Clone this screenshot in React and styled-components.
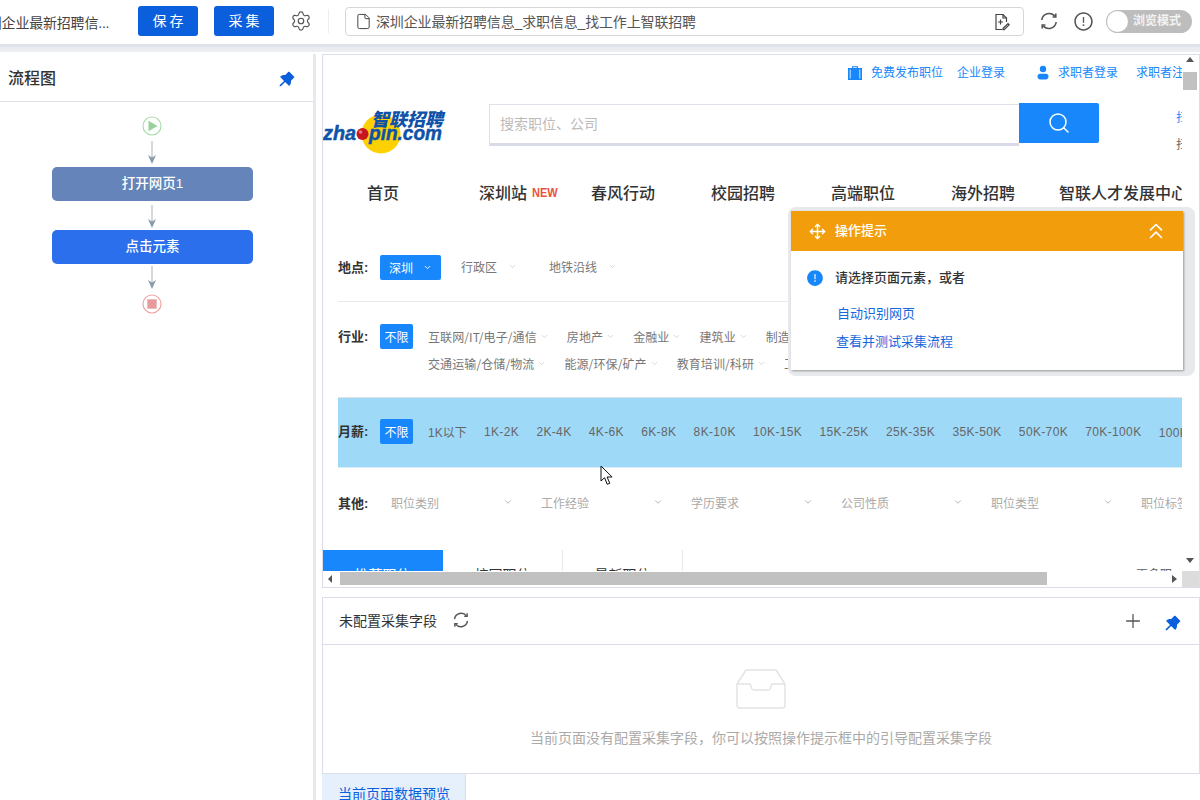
import React from "react";
import styled, { createGlobalStyle } from "styled-components";
import { Settings, File, Move, ChevronsUp, Search, Plus, ChevronDown } from "lucide-react";
import { AiFillPushpin, AiOutlineExclamationCircle, AiFillExclamationCircle } from "react-icons/ai";

const Global = createGlobalStyle`
  html, body { margin: 0; padding: 0; width: 1200px; height: 800px; overflow: hidden; background: #fff; }
  body, button, input { font-family: "Liberation Sans", "Noto Sans CJK SC", sans-serif; }
  * { box-sizing: border-box; }
`;

const Screen = styled.div`position: relative; width: 1200px; height: 800px; overflow: hidden; background: #fff; color: #333;`;

/* top bar */
const TopBar = styled.header`position: absolute; left: 0; top: 0; width: 1200px; height: 44px; background: #fff;`;
const Gutter = styled.div`position: absolute; left: 0; top: 44px; width: 1200px; height: 8px; background: linear-gradient(#dfe2e9 0, #dfe2e9 3px, #e9ebf0 3px, #eceef2 100%);`;
const DocTitle = styled.div`position: absolute; left: -26px; top: 13px; font-size: 14px; line-height: 20px; letter-spacing: -0.2px; color: #444; white-space: nowrap;`;
const ActionButton = styled.button`
  position: absolute; left: ${p => p.$x}px; top: 6px; width: 60px; height: 30px; border: 0; border-radius: 3px;
  background: #0b5fdc; color: #fff; font-size: 14px; line-height: 30px; letter-spacing: 3px; padding: 0 0 0 3px;
`;
const GearIcon = styled(Settings)`position: absolute; left: 290px; top: 10px; color: #555;`;
const Divider = styled.div`position: absolute; left: 328px; top: 9px; width: 1px; height: 24px; background: #eceef1;`;
const UrlBox = styled.div`position: absolute; left: 345px; top: 7px; width: 679px; height: 29px; border: 1px solid #d4d6da; border-radius: 4px;`;
const UrlFile = styled(File)`position: absolute; left: 9px; top: 5px; color: #444;`;
const UrlText = styled.span`position: absolute; left: 30px; top: 4px; font-size: 14px; line-height: 20px; letter-spacing: -0.15px; color: #555; white-space: nowrap;`;
const ToolSvg = styled.svg`position: absolute; left: ${p => p.$x}px; top: ${p => p.$y}px; display: block;`;
const AlertIcon = styled(AiOutlineExclamationCircle)`position: absolute; left: 1073px; top: 11px; color: #555;`;
const Toggle = styled.div`position: absolute; left: 1106px; top: 10px; width: 86px; height: 23px; border-radius: 12px; background: #bdbdbd;`;
const Knob = styled.div`position: absolute; left: 1px; top: 1px; width: 21px; height: 21px; border-radius: 50%; background: #fff;`;
const ToggleText = styled.span`position: absolute; left: 27px; top: 3px; font-size: 12px; line-height: 17px; font-weight: 700; color: #f2f2f2; white-space: nowrap;`;

/* flow panel */
const FlowPanel = styled.aside`position: absolute; left: 0; top: 54px; width: 316px; height: 746px; background: #fff; border-right: 3px solid #e6e8ee;`;
const FlowHeader = styled.div`position: relative; height: 48px; border-bottom: 1px solid #dfe0ea;`;
const FlowTitle = styled.h2`position: absolute; left: 8px; top: 13px; margin: 0; font-size: 16px; line-height: 24px; font-weight: 500; color: #333;`;
const PinIcon = styled(AiFillPushpin)`position: absolute; left: ${p => p.$x}px; top: ${p => p.$y}px; color: #0b5fdc;`;
const FlowNode = styled.div`
  position: absolute; left: 52px; top: ${p => p.$y}px; width: 201px; height: 34px; border-radius: 5px;
  background: ${p => p.$bg}; color: #fff; font-size: 13.5px; font-weight: 500; line-height: 34px; text-align: center;
`;

/* embedded page */
const Frame = styled.section`position: absolute; left: 322px; top: 54px; width: 878px; height: 534px; background: #fff; border: 1px solid #dcdde8;`;
const Viewport = styled.div`position: absolute; left: 0; top: 0; width: 859px; height: 516px; overflow: hidden; background: #fff;`;
const TopLink = styled.a`position: absolute; left: ${p => p.$x}px; top: 10px; font-size: 12px; line-height: 17px; color: #1787fb; white-space: nowrap;`;
const LinkIcon = styled.svg`position: absolute; left: ${p => p.$x}px; top: 10px;`;
const SearchField = styled.div`
  position: absolute; left: 166px; top: 49px; width: 530px; height: 42px;
  border: 1px solid #e0e1ea; border-bottom: 3px solid #d9dbe8; border-right: 0;
  padding-left: 10px; font-size: 14px; line-height: 38px; color: #bbb;
`;
const SearchButton = styled.button`position: absolute; left: 696px; top: 48px; width: 80px; height: 40px; border: 0; border-radius: 0 2px 2px 0; background: #1787fb; color: #fff; padding: 0; display: flex; align-items: center; justify-content: center;`;
const SideWord = styled.span`position: absolute; left: 853px; top: ${p => p.$y}px; font-size: 12px; line-height: 16px; color: ${p => p.$c};`;
const NavItem = styled.a`position: absolute; left: ${p => p.$x}px; top: 127px; font-size: 16px; line-height: 24px; font-weight: 500; color: #333; white-space: nowrap;`;
const NewTag = styled.span`position: absolute; left: 209px; top: 130px; font-size: 13px; line-height: 16px; font-weight: 700; color: #e9533c; transform: scaleX(.85); transform-origin: left center;`;

const FilterRow = styled.div`position: absolute; left: 15px; top: ${p => p.$y}px; width: 844px; height: 25px; display: flex; align-items: center; white-space: nowrap;`;
const FilterLabel = styled.b`width: 42px; flex: none; font-size: 13px; font-weight: 700; color: #333; line-height: 18px;`;
const Selected = styled.span`
  flex: none; height: 25px; width: ${p => p.$w}px; background: #1787fb; color: #fff; border-radius: 2px; font-size: 12px;
  display: flex; align-items: center; justify-content: center; gap: 10px;
`;
const CityMenu = styled.span`flex: none; margin-left: ${p => p.$ml}px; font-size: 12px; color: #777; display: flex; align-items: center; gap: 11px; position: relative; top: -1px;`;
const Hairline = styled.div`position: absolute; left: 15px; top: 246px; width: 844px; height: 1px; background: #e9eaee;`;
const ItemList = styled.div`display: flex; align-items: center; gap: ${p => p.$gap}px; margin-left: ${p => p.$ml}px; white-space: nowrap;`;
const Item = styled.span`flex: none; font-family: "Noto Sans CJK SC", sans-serif; font-size: 12px; letter-spacing: .1px; color: #777; display: flex; align-items: center; gap: 3px;`;
const SalaryBand = styled.div`position: absolute; left: 15px; top: 342px; width: 844px; height: 71px; background: #9fd9f8; border-top: 1px solid #dfe3ea; border-bottom: 1px solid #d9ecf7;`;
const SalaryItem = styled.span`flex: none; font-size: 12px; letter-spacing: ${p => (p.$tight ? 0 : 0.35)}px; color: #666;`;
const OtherSelect = styled.span`flex: none; position: relative; width: 150px; font-size: 12px; color: #aaa; top: -1px;`;
const OtherCaret = styled(ChevronDown)`position: absolute; left: 112px; top: 3px; color: #aaa;`;
const ListTab = styled.div`
  position: absolute; left: ${p => p.$x}px; top: 495px; width: 120px; height: 50px; padding-top: 15px; text-align: center;
  font-size: 14px; line-height: 20px; background: ${p => (p.$on ? "#1787fb" : "#fff")}; color: ${p => (p.$on ? "#fff" : "#333")};
  border-right: 1px solid ${p => (p.$on ? "#1787fb" : "#e8e8e8")};
`;
const MoreLink = styled.span`position: absolute; left: 813px; top: 510px; font-size: 12px; line-height: 20px; color: #666;`;

/* the tip floats over the page's scrollbar */
const TipHalo = styled.div`position: absolute; left: 465px; top: 152px; width: 407px; height: 169px; background: #e8e9ec; border-radius: 8px;`;
const TipBox = styled.div`position: absolute; left: 468px; top: 156px; width: 392px; height: 159px; background: #fff; box-shadow: 1px 1px 2px #999;`;
const TipHeader = styled.div`height: 40px; background: #f29e0c; color: #fff; position: relative; font-size: 13px; line-height: 40px; padding-left: 44px; font-weight: 500;`;
const TipMove = styled(Move)`position: absolute; left: 18px; top: 12px;`;
const TipFold = styled(ChevronsUp)`position: absolute; right: 14px; top: 7px;`;
const TipInfo = styled(AiFillExclamationCircle)`position: absolute; left: 15px; top: 58px; color: #1787fb;`;
const TipMessage = styled.div`position: absolute; left: 44px; top: 58px; font-size: 13px; line-height: 18px; font-weight: 500; color: #333;`;
const TipLink = styled.a`position: absolute; left: ${p => p.$x}px; top: ${p => p.$y}px; font-size: 13px; line-height: 18px; color: #1668dc;`;

/* scrollbars */
const VScroll = styled.div`position: absolute; left: 859px; top: 0; width: 17px; height: 516px; background: #fff;`;
const VThumb = styled.div`position: absolute; left: 1px; top: 17px; width: 14px; height: 18px; background: #c1c1c1;`;
const Arrow = styled.div`
  position: absolute; left: ${p => p.$x}px; top: ${p => p.$y}px; width: 0; height: 0;
  border-style: solid; border-color: transparent; border-width: ${p => p.$w};
  ${p => `border-${p.$side}-color: #555;`}
`;
const HScroll = styled.div`position: absolute; left: 0; top: 516px; width: 859px; height: 16px; background: #fff;`;
const HThumb = styled.div`position: absolute; left: 17px; top: 1px; width: 707px; height: 13px; background: #c1c1c1;`;
const Corner = styled.div`position: absolute; left: 859px; top: 516px; width: 17px; height: 16px; background: #dcdcdc;`;

/* fields panel */
const FieldsPanel = styled.section`position: absolute; left: 322px; top: 597px; width: 878px; height: 177px; background: #fff; border: 1px solid #dcdde8;`;
const FieldsHeader = styled.div`position: relative; height: 47px; border-bottom: 1px solid #dcdde8;`;
const FieldsTitle = styled.span`position: absolute; left: 16px; top: 13px; font-size: 14px; line-height: 20px; color: #333;`;
const PlusIcon = styled(Plus)`position: absolute; left: 799px; top: 12px; color: #555;`;
const EmptyIcon = styled.svg`position: absolute; left: 413px; top: 71px;`;
const EmptyText = styled.p`position: absolute; left: 0; top: 130px; width: 876px; margin: 0; font-size: 14px; line-height: 20px; color: #aaa; text-align: center;`;
const PreviewTab = styled.div`position: absolute; left: 322px; top: 774px; width: 144px; height: 30px; background: #e6f0fc; border-right: 1px solid #dcdde8; padding-left: 16px; font-size: 14px; line-height: 40px; color: #0b5fdc; white-space: nowrap;`;
const Cursor = styled.svg`position: absolute; left: 600px; top: 465px;`;

const Refresh = ({ x, y, size = 20, color = "#555" }) => (
  <ToolSvg $x={x} $y={y} width={size} height={size} viewBox="0 0 20 20" fill="none" stroke={color} strokeWidth="1.6">
    <path d="M2.8 9A7.4 7.4 0 0 1 16 5.4" />
    <path d="M17.2 11A7.4 7.4 0 0 1 4 14.6" />
    <path d="M16.8 2.6v3.4h-3.2" />
    <path d="M3.2 17.4V14h3.2" />
  </ToolSvg>
);

const Caret = () => <ChevronDown size={9} color="#bbb" strokeWidth={1.5} />;

const nav = [["首页", 44], ["深圳站", 156], ["春风行动", 268], ["校园招聘", 388], ["高端职位", 508], ["海外招聘", 628], ["智联人才发展中心", 736]];
const row1 = ["互联网/IT/电子/通信", "房地产", "金融业", "建筑业", "制造业"];
const row2 = ["交通运输/仓储/物流", "能源/环保/矿产", "教育培训/科研", "工"];
const salary = ["1K-2K", "2K-4K", "4K-6K", "6K-8K", "8K-10K", "10K-15K", "15K-25K", "25K-35K", "35K-50K", "50K-70K", "70K-100K", "100K以上"];
const others = ["职位类别", "工作经验", "学历要求", "公司性质", "职位类型", "职位标签"];

const Logo = () => (
  <ToolSvg $x={0} $y={50} width={125} height={54} viewBox="0 0 125 54">
    <circle cx="58" cy="29" r="19.5" fill="#fdd000" />
    <text x="48" y="21" fontSize="18" fontWeight="900" fontStyle="italic" fill="#0f52a8" textLength="72" lengthAdjust="spacingAndGlyphs" fontFamily="'Noto Sans CJK SC', sans-serif">智联招聘</text>
    <text x="0" y="35" fontSize="21" fontWeight="700" fontStyle="italic" fill="#0f52a8" stroke="#0f52a8" strokeWidth=".5" textLength="33" lengthAdjust="spacingAndGlyphs" fontFamily="'Liberation Sans', sans-serif">zha</text>
    <text x="46" y="35" fontSize="21" fontWeight="700" fontStyle="italic" fill="#0f52a8" stroke="#0f52a8" strokeWidth=".5" textLength="73" lengthAdjust="spacingAndGlyphs" fontFamily="'Liberation Sans', sans-serif">pin.com</text>
    <circle cx="39.5" cy="29" r="6" fill="#c5161d" />
    <circle cx="37.5" cy="27" r="1.8" fill="#e8777a" />
  </ToolSvg>
);

const FlowArrow = ({ y, h = 23 }) => (
  <ToolSvg $x={147} $y={y} width={10} height={h} viewBox={`0 0 10 ${h}`}>
    <line x1="5" y1="0" x2="5" y2={h - 5} stroke="#a9b3bd" strokeWidth="1" />
    <path d={`M1 ${h - 9} L5 ${h - 6.5} L9 ${h - 9} L5 ${h} Z`} fill="#8a9cab" />
  </ToolSvg>
);

export default function App() {
  return (
    <Screen>
      <Global />
      <TopBar>
        <DocTitle>深圳企业最新招聘信...</DocTitle>
        <ActionButton $x={138}>保存</ActionButton>
        <ActionButton $x={214}>采集</ActionButton>
        <GearIcon size={22} strokeWidth={1.3} />
        <Divider />
        <UrlBox>
          <UrlFile size={17} strokeWidth={1.4} />
          <UrlText>深圳企业最新招聘信息_求职信息_找工作上智联招聘</UrlText>
          <ToolSvg $x={648} $y={5} width={16} height={18} viewBox="0 0 16 18" fill="none" stroke="#444" strokeWidth="1.2">
            <path d="M8 16.5H2V1.5h7l3.5 3.5v4" />
            <path d="M9 1.5V5h3.5" />
            <path d="M6.5 6.5v5M4 9h5" />
            <path d="M9 15.5l5-5 1.2 1.2-5 5H9z" />
          </ToolSvg>
        </UrlBox>
        <Refresh x={1039} y={11} />
        <AlertIcon size={21} />
        <Toggle>
          <Knob />
          <ToggleText>浏览模式</ToggleText>
        </Toggle>
      </TopBar>
      <Gutter />

      <FlowPanel>
        <FlowHeader>
          <FlowTitle>流程图</FlowTitle>
          <PinIcon $x={277} $y={15} size={20} />
        </FlowHeader>
        <ToolSvg $x={142} $y={62} width={20} height={20} viewBox="0 0 20 20">
          <circle cx="10" cy="10" r="9" fill="#fff" stroke="#a6d8a8" strokeWidth="1.1" />
          <path d="M6.5 4.8L15.5 10 6.5 15.2Z" fill="#97d29a" />
        </ToolSvg>
        <FlowArrow y={87} />
        <FlowNode $y={113} $bg="#6585ba">打开网页1</FlowNode>
        <FlowArrow y={151} />
        <FlowNode $y={176} $bg="#2b6fec">点击元素</FlowNode>
        <FlowArrow y={212} />
        <ToolSvg $x={142} $y={240} width={20} height={20} viewBox="0 0 20 20">
          <circle cx="10" cy="10" r="9" fill="#fff" stroke="#ec9f9f" strokeWidth="1.1" />
          <rect x="5.3" y="5.3" width="9.4" height="9.4" fill="#e99a9c" />
        </ToolSvg>
      </FlowPanel>

      <Frame>
        <Viewport>
          <LinkIcon $x={524} width={16} height={16} viewBox="0 0 16 16" fill="#1787fb">
            <path d="M5 3V1.2h6V3h4v12H1V3zM6.2 3h3.6V2.2H6.2z" />
            <path d="M3.2 4.5v9" stroke="#fff" strokeWidth=".8" />
            <path d="M12.8 4.5v9" stroke="#fff" strokeWidth=".8" />
          </LinkIcon>
          <TopLink $x={548}>免费发布职位</TopLink>
          <TopLink $x={634}>企业登录</TopLink>
          <LinkIcon $x={713} width={14} height={16} viewBox="0 0 14 16" fill="#1787fb">
            <circle cx="7" cy="4" r="3.2" />
            <rect x="1.5" y="8.8" width="11" height="5.6" rx="2.8" />
          </LinkIcon>
          <TopLink $x={735}>求职者登录</TopLink>
          <TopLink $x={813}>求职者注册</TopLink>

          <Logo />
          <SearchField>搜索职位、公司</SearchField>
          <SearchButton><Search size={24} strokeWidth={1.5} /></SearchButton>
          <SideWord $y={55} $c="#1787fb">扫</SideWord>
          <SideWord $y={82} $c="#666">扫</SideWord>

          {nav.map(([t, x]) => <NavItem key={t} $x={x}>{t}</NavItem>)}
          <NewTag>NEW</NewTag>

          <FilterRow $y={200}>
            <FilterLabel>地点:</FilterLabel>
            <Selected $w={61}>深圳<ChevronDown size={9} strokeWidth={2.5} /></Selected>
            <CityMenu $ml={20}>行政区<Caret /></CityMenu>
            <CityMenu $ml={32}>地铁沿线<Caret /></CityMenu>
          </FilterRow>
          <Hairline />
          <FilterRow $y={269}>
            <FilterLabel>行业:</FilterLabel>
            <Selected $w={33}>不限</Selected>
            <ItemList $gap={18} $ml={15}>
              {row1.map(t => <Item key={t}>{t}<Caret /></Item>)}
            </ItemList>
          </FilterRow>
          <FilterRow $y={296}>
            <FilterLabel />
            <ItemList $gap={18} $ml={48}>
              {row2.map(t => <Item key={t}>{t}<Caret /></Item>)}
            </ItemList>
          </FilterRow>
          <SalaryBand />
          <FilterRow $y={364}>
            <FilterLabel>月薪:</FilterLabel>
            <Selected $w={33}>不限</Selected>
            <ItemList $gap={17.3} $ml={15}>
              <SalaryItem $tight>1K以下</SalaryItem>
              {salary.map(t => <SalaryItem key={t}>{t}</SalaryItem>)}
            </ItemList>
          </FilterRow>
          <FilterRow $y={436}>
            <FilterLabel>其他:</FilterLabel>
            <ItemList $gap={0} $ml={11}>
              {others.map(t => <OtherSelect key={t}>{t}<OtherCaret size={10} /></OtherSelect>)}
            </ItemList>
          </FilterRow>

          <ListTab $x={0} $on>推荐职位</ListTab>
          <ListTab $x={120}>校园职位</ListTab>
          <ListTab $x={240}>最新职位</ListTab>
          <MoreLink>更多职位</MoreLink>
        </Viewport>
        <VScroll>
          <Arrow $x={4} $y={2} $w="0 4px 5px" $side="bottom" />
          <VThumb />
          <Arrow $x={4} $y={503} $w="5px 4px 0" $side="top" />
        </VScroll>
        <HScroll>
          <Arrow $x={5} $y={4} $w="4px 4px 4px 0" $side="right" />
          <HThumb />
          <Arrow $x={849} $y={4} $w="4px 0 4px 5px" $side="left" />
        </HScroll>
        <Corner />
        <TipHalo />
        <TipBox>
          <TipHeader>
            <TipMove size={17} strokeWidth={2} />
            操作提示
            <TipFold size={26} strokeWidth={1.5} />
          </TipHeader>
          <TipInfo size={18} />
          <TipMessage>请选择页面元素，或者</TipMessage>
          <TipLink $x={46} $y={94}>自动识别网页</TipLink>
          <TipLink $x={45} $y={122}>查看并测试采集流程</TipLink>
        </TipBox>
      </Frame>

      <FieldsPanel>
        <FieldsHeader>
          <FieldsTitle>未配置采集字段</FieldsTitle>
          <Refresh x={129} y={13} size={18} />
          <PlusIcon size={22} strokeWidth={1.4} />
          <PinIcon $x={840} $y={15} size={20} />
        </FieldsHeader>
        <EmptyIcon width={50} height={40} viewBox="0 0 50 40" fill="none" stroke="#e3e3e3" strokeWidth="1.5">
          <path d="M1 15L10 1h30l9 14v21a3 3 0 0 1-3 3H4a3 3 0 0 1-3-3z" />
          <path d="M1 15h13l2 5a2 2 0 0 0 2 1h14a2 2 0 0 0 2-1l2-5h13" />
        </EmptyIcon>
        <EmptyText>当前页面没有配置采集字段，你可以按照操作提示框中的引导配置采集字段</EmptyText>
      </FieldsPanel>
      <PreviewTab>当前页面数据预览</PreviewTab>

      <Cursor width={14} height={21} viewBox="0 0 14 21">
        <path d="M1 1v15l3.6-3.3 2.6 6.6 2.6-1-2.7-6.3h5z" fill="#fff" stroke="#111" strokeWidth="1" />
      </Cursor>
    </Screen>
  );
}
